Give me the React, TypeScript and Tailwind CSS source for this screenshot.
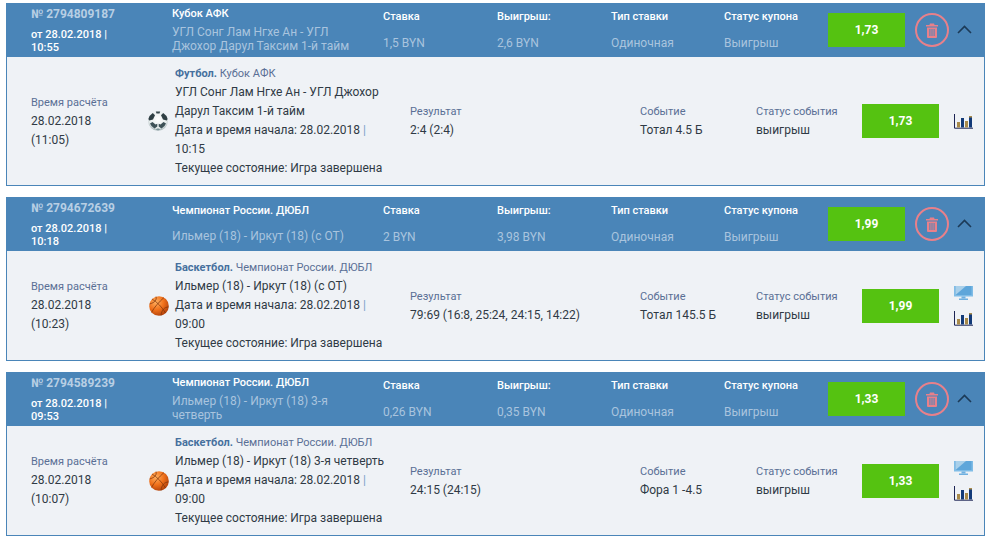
import React from "react";

const Trash = () => (
  <svg width="14" height="15" viewBox="0 0 14 15" fill="#e8808a">
    <path d="M5 0.5h4l.6 1.5H13v1.5H1V2h3.4z" />
    <path fillRule="evenodd" d="M2 4.5h10V14a1 1 0 0 1-1 1H3a1 1 0 0 1-1-1zM4.4 6v7h1V6zM6.5 6v7h1V6zM8.6 6v7h1V6z" />
  </svg>
);

const Chevron = () => (
  <svg width="15" height="9" viewBox="0 0 15 9" fill="none" stroke="#1c3a57" strokeWidth="1.6">
    <path d="M1 8l6.5-6.5L14 8" />
  </svg>
);

const Chart = () => (
  <svg width="19" height="15" viewBox="0 0 19 15">
    <path d="M0.5 0v14.200H19" fill="none" stroke="#1c2454" strokeWidth="1" />
    <rect x="3" y="8" width="3" height="5.500" fill="#a88a4a" />
    <rect x="7" y="4" width="3" height="9.500" fill="#123a78" />
    <rect x="11" y="7" width="3" height="6.500" fill="#a88a4a" />
    <rect x="15" y="3" width="3" height="10.500" fill="#123a78" />
    <rect x="15" y="2" width="3" height="1.500" fill="#a88a4a" />
  </svg>
);

const Monitor = () => (
  <svg width="19" height="14" viewBox="0 0 19 14">
    <rect x="0" y="0" width="19" height="10.500" fill="#7fbce6" />
    <rect x="1.500" y="0" width="16" height="9" fill="#5ea6da" />
    <path d="M1.500 9L12 0H1.500z" fill="#a9d0ea" />
    <rect x="7.500" y="10.500" width="4" height="2" fill="#6fb0e0" />
    <rect x="5" y="12.500" width="9" height="1.500" fill="#6fb0e0" />
  </svg>
);

const Football = () => (
  <svg width="20" height="20" viewBox="0 0 20 20">
    <defs>
      <radialGradient id="fb" cx="50%" cy="40%" r="60%">
        <stop offset="0%" stopColor="#ffffff" />
        <stop offset="75%" stopColor="#e6ecec" />
        <stop offset="100%" stopColor="#a5b4b6" />
      </radialGradient>
    </defs>
    <circle cx="10" cy="10" r="9.800" fill="url(#fb)" />
    <path d="M7.800 .6Q10 .2 12.200 .6L11.500 2.500H8.500z" fill="#39494e" />
    <path d="M4.800 2L7 4.200 5 8.500 1.200 9.500.4 8Q1.500 4 4.800 2z" fill="#2f3f44" />
    <path d="M15.200 2L13 4.200 15 8.500 18.800 9.500 19.600 8Q18.500 4 15.200 2z" fill="#2f3f44" />
    <path d="M4.500 11L7.500 13.500 9.300 12.800V15.500L6.500 17.500Q3 15.500 2 12.500z" fill="#3d5157" />
    <path d="M15.500 11L12.500 13.500 10.700 12.800V15.500L13.500 17.500Q17 15.500 18 12.500z" fill="#3d5157" />
    <path d="M7.500 18.800L10 17.200 12.500 18.800Q10 19.500 7.500 18.800z" fill="#7d9498" />
  </svg>
);

const Basketball = () => (
  <svg width="20" height="20" viewBox="0 0 20 20">
    <defs>
      <radialGradient id="bb" cx="35%" cy="30%" r="80%">
        <stop offset="0%" stopColor="#ffb060" />
        <stop offset="50%" stopColor="#f0701a" />
        <stop offset="100%" stopColor="#a83a08" />
      </radialGradient>
    </defs>
    <circle cx="10" cy="10" r="9.800" fill="url(#bb)" />
    <g fill="none" stroke="#7a3008" strokeWidth="0.7">
      <path d="M3 3c5 3 10 8 13.500 14" />
      <path d="M15 1.500C10 6 5 11.500 2.500 16.500" />
      <path d="M7 .6c1 3-1 6-6.500 7.400" />
      <path d="M19.500 11c-4 0-7 3-7.500 8.700" />
    </g>
  </svg>
);

type Coupon = {
  id: string;
  date: string;
  time: string;
  league: string;
  match: string;
  stake: string;
  win: string;
  coef: string;
  sport: "Футбол." | "Баскетбол.";
  calc: string;
  calcTime: string;
  start: string;
  result: string;
  event: string;
  tv: boolean;
};

const coupons: Coupon[] = [
  {
    id: "№ 2794809187", date: "от 28.02.2018 |", time: "10:55", league: "Кубок АФК",
    match: "УГЛ Сонг Лам Нгхе Ан - УГЛ Джохор Дарул Таксим 1-й тайм",
    stake: "1,5 BYN", win: "2,6 BYN", coef: "1,73", sport: "Футбол.",
    calc: "28.02.2018", calcTime: "(11:05)", start: "10:15", result: "2:4 (2:4)", event: "Тотал 4.5 Б", tv: false,
  },
  {
    id: "№ 2794672639", date: "от 28.02.2018 |", time: "10:18", league: "Чемпионат России. ДЮБЛ",
    match: "Ильмер (18) - Иркут (18) (с ОТ)",
    stake: "2 BYN", win: "3,98 BYN", coef: "1,99", sport: "Баскетбол.",
    calc: "28.02.2018", calcTime: "(10:23)", start: "09:00", result: "79:69 (16:8, 25:24, 24:15, 14:22)", event: "Тотал 145.5 Б", tv: true,
  },
  {
    id: "№ 2794589239", date: "от 28.02.2018 |", time: "09:53", league: "Чемпионат России. ДЮБЛ",
    match: "Ильмер (18) - Иркут (18) 3-я четверть",
    stake: "0,26 BYN", win: "0,35 BYN", coef: "1,33", sport: "Баскетбол.",
    calc: "28.02.2018", calcTime: "(10:07)", start: "09:00", result: "24:15 (24:15)", event: "Фора 1 -4.5", tv: true,
  },
];

function HeadCol({ title, value, w }: { title: string; value: string; w: string }) {
  return (
    <div className={`${w} shrink-0 flex flex-col justify-between h-full pt-[7px] pb-[7px]`}>
      <div className="text-white font-medium text-[11px] leading-[14px]">{title}</div>
      <div className="text-[#a9c4de] text-[12px] leading-[14px]">{value}</div>
    </div>
  );
}

function Card({ c }: { c: Coupon }) {
  const oneLine = c.match.length < 32;
  return (
    <div className="mb-[11px] border-b border-x border-[#4a85b8] w-[979px]">
      <div className="h-[54px] -mx-px bg-[#4a85b8] flex items-start pl-[25px]">
        <div className="w-[141px] shrink-0 pt-[4px]">
          <div className="text-[#b8cfe4] font-bold text-[12px] leading-[14px]">{c.id}</div>
          <div className="text-white font-medium text-[11px] leading-[13px] mt-[7px]">{c.date}<br />{c.time}</div>
        </div>
        <div className={`w-[211px] shrink-0 h-full flex flex-col ${oneLine ? "pt-[7px]" : "pt-[4px]"}`}>
          <div className="text-white font-medium text-[11px] leading-[14px]">{c.league}</div>
          <div className={`text-[#a9c4de] text-[12px] leading-[14px] pr-[20px] ${oneLine ? "mt-[11px]" : "mt-[4px]"}`}>{c.match}</div>
        </div>
        <HeadCol title="Ставка" value={c.stake} w="w-[114px]" />
        <HeadCol title="Выигрыш:" value={c.win} w="w-[114px]" />
        <HeadCol title="Тип ставки" value="Одиночная" w="w-[113px]" />
        <HeadCol title="Статус купона" value="Выигрыш" w="w-[104px]" />
        <div className="w-[77px] h-[34px] mt-[10px] shrink-0 bg-[#55c211] text-white font-bold text-[12px] flex items-center justify-center">{c.coef}</div>
        <div className="w-[34px] h-[34px] mt-[10px] ml-[10px] shrink-0 rounded-full border-2 border-[#e8808a] flex items-center justify-center"><Trash /></div>
        <div className="ml-[8px] mt-[22px] shrink-0 flex"><Chevron /></div>
      </div>
      <div className="bg-[#eff2f6] flex items-center py-[7px] pl-[24px] text-[12px] text-[#2f3a45]">
        <div className="w-[117px] shrink-0 leading-[19px] pr-[30px]">
          <div className="text-[#5a6f95] text-[11px]">Время расчёта</div>
          <div>{c.calc}</div>
          <div>{c.calcTime}</div>
        </div>
        <div className={`w-[27px] shrink-0 flex ${c.sport === "Футбол." ? "" : "pl-px"}`}>{c.sport === "Футбол." ? <Football /> : <Basketball />}</div>
        <div className="w-[235px] shrink-0 leading-[19px] pr-[20px]">
          <div className="text-[11px] text-[#5a6f95]"><span className="font-bold text-[#46709e]">{c.sport}</span> {c.league}</div>
          <div>{c.match}</div>
          <div>Дата и время начала: 28.02.2018 <span className="text-[#7aa0c8]">|</span> {c.start}</div>
          <div>Текущее состояние: Игра завершена</div>
        </div>
        <div className="w-[230px] shrink-0 leading-[19px]">
          <div className="text-[#5a6f95] text-[11px]">Результат</div>
          <div>{c.result}</div>
        </div>
        <div className="w-[116px] shrink-0 leading-[19px]">
          <div className="text-[#5a6f95] text-[11px]">Событие</div>
          <div>{c.event}</div>
        </div>
        <div className="w-[106px] shrink-0 leading-[19px]">
          <div className="text-[#5a6f95] text-[11px]">Статус события</div>
          <div>выигрыш</div>
        </div>
        <div className="w-[77px] h-[34px] shrink-0 bg-[#55c211] text-white font-bold text-[12px] flex items-center justify-center">{c.coef}</div>
        <div className="ml-[15px] w-[19px] shrink-0 flex flex-col items-center gap-[11px]">
          {c.tv && <Monitor />}
          <Chart />
        </div>
      </div>
    </div>
  );
}

export default function App() {
  return (
    <div className="w-[992px] h-[539px] overflow-hidden bg-white pt-[3px] pl-[6px] font-['Roboto',sans-serif]">
      {coupons.map((c) => (
        <Card key={c.id} c={c} />
      ))}
    </div>
  );
}
